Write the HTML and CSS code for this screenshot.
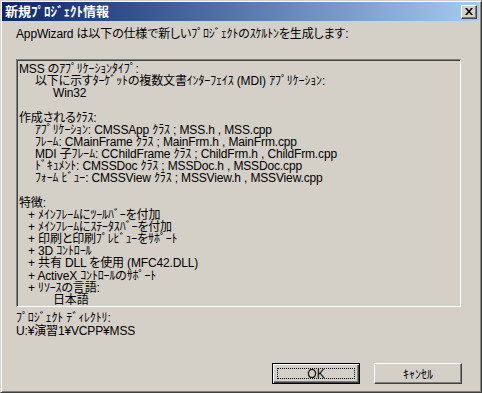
FILE: index.html
```html
<!DOCTYPE html>
<html>
<head>
    <title>新規プロジェクト情報</title>
    <link rel="stylesheet" href="styles.css">
</head>
<body>
    <div class="window">
        <div class="titlebar">
            <span class="title">新規ﾌﾟﾛｼﾞｪｸﾄ情報</span>
            <span class="close-btn">
                <svg width="8" height="7" viewBox="0 0 8 7">
                    <path d="M0 0h2l2 2.5l2-2.5h2l-3 3.5l3 3.5h-2l-2-2.5l-2 2.5h-2l3-3.5z" fill="#000"/>
                </svg>
            </span>
        </div>

        <div class="content">
            <p class="intro">AppWizard は以下の仕様で新しいﾌﾟﾛｼﾞｪｸﾄのｽｹﾙﾄﾝを生成します:</p>

            <!-- summary box -->
            <div class="summary">
                <div>MSS のｱﾌﾟﾘｹｰｼｮﾝﾀｲﾌﾟ:</div>
                <div class="ind1">以下に示すﾀｰｹﾞｯﾄの複数文書ｲﾝﾀｰﾌｪｲｽ (MDI) ｱﾌﾟﾘｹｰｼｮﾝ:</div>
                <div class="ind2">Win32</div>
                <div class="blank"></div>
                <div>作成されるｸﾗｽ:</div>
                <div class="ind1">ｱﾌﾟﾘｹｰｼｮﾝ: CMSSApp ｸﾗｽ ; MSS.h , MSS.cpp</div>
                <div class="ind1">ﾌﾚｰﾑ: CMainFrame ｸﾗｽ ; MainFrm.h , MainFrm.cpp</div>
                <div class="ind1">MDI 子ﾌﾚｰﾑ: CChildFrame ｸﾗｽ ; ChildFrm.h , ChildFrm.cpp</div>
                <div class="ind1">ﾄﾞｷｭﾒﾝﾄ: CMSSDoc ｸﾗｽ ; MSSDoc.h , MSSDoc.cpp</div>
                <div class="ind1">ﾌｫｰﾑ ﾋﾞｭｰ: CMSSView ｸﾗｽ ; MSSView.h , MSSView.cpp</div>
                <div class="blank"></div>
                <div>特徴:</div>
                <div class="feat">+ ﾒｲﾝﾌﾚｰﾑにﾂｰﾙﾊﾞｰを付加</div>
                <div class="feat">+ ﾒｲﾝﾌﾚｰﾑにｽﾃｰﾀｽﾊﾞｰを付加</div>
                <div class="feat">+ 印刷と印刷ﾌﾟﾚﾋﾞｭｰをｻﾎﾟｰﾄ</div>
                <div class="feat">+ 3D ｺﾝﾄﾛｰﾙ</div>
                <div class="feat">+ 共有 DLL を使用 (MFC42.DLL)</div>
                <div class="feat">+ ActiveX ｺﾝﾄﾛｰﾙのｻﾎﾟｰﾄ</div>
                <div class="feat">+ ﾘｿｰｽの言語:</div>
                <div class="ind2">日本語</div>
            </div>

            <div class="dir-label">ﾌﾟﾛｼﾞｪｸﾄ ﾃﾞｨﾚｸﾄﾘ:</div>
            <div class="dir-path">U:¥演習1¥VCPP¥MSS</div>

            <div class="buttons">
                <button class="btn btn-default"><span class="focus">OK</span></button>
                <button class="btn">ｷｬﾝｾﾙ</button>
            </div>
        </div>
    </div>
</body>
</html>
```

FILE: styles.css
```css
body {
    margin: 0;
    padding: 0;
    background-color: #d4d0c8;
    font-family: "Liberation Sans", "Noto Sans CJK JP", sans-serif;
    font-size: 12px;
    font-feature-settings: "palt";
    color: #000;
}

/* outer window frame */
.window {
    width: 482px;
    height: 393px;
    box-sizing: border-box;
    background-color: #d4d0c8;
    border-top: 1px solid #d4d0c8;
    border-left: 1px solid #d4d0c8;
    border-right: 1px solid #404040;
    border-bottom: 1px solid #404040;
    box-shadow: inset 1px 1px 0 #ffffff, inset -1px -1px 0 #808080;
    padding: 1px 2px 0 1px;
    overflow: hidden;
}

.titlebar {
    height: 19px;
    display: flex;
    align-items: center;
    justify-content: space-between;
    padding: 0 2px 0 3px;
    background: linear-gradient(to right, #0a246a, #a6caf0);
}

.title {
    color: #ffffff;
    font-weight: bold;
    font-size: 13px;
    line-height: 13px;
}

.close-btn {
    width: 16px;
    height: 14px;
    box-sizing: border-box;
    display: flex;
    align-items: center;
    justify-content: center;
    background-color: #d4d0c8;
    border-top: 1px solid #ffffff;
    border-left: 1px solid #ffffff;
    border-right: 1px solid #404040;
    border-bottom: 1px solid #404040;
    box-shadow: inset -1px -1px 0 #808080;
}

.content {
    padding: 7px 0 0 14px;
    letter-spacing: -0.15px;
}

.intro {
    margin: 0;
    line-height: 13px;
}

/* sunken box */
.summary {
    margin-top: 18px;
    width: 445px;
    height: 248px;
    box-sizing: border-box;
    border-top: 1px solid #808080;
    border-left: 1px solid #808080;
    border-right: 1px solid #ffffff;
    border-bottom: 1px solid #ffffff;
    box-shadow: inset 1px 1px 0 #404040, inset -1px -1px 0 #d4d0c8;
    padding: 3px 0 0 2px;
    line-height: 12.15px;
    white-space: nowrap;
}

.blank {
    height: 12.15px;
}

.ind1 {
    padding-left: 16px;
}

.ind2 {
    padding-left: 34px;
}

.feat {
    padding-left: 9px;
}

.dir-label {
    margin-top: 5px;
    line-height: 13px;
}

.dir-path {
    line-height: 13px;
}

.buttons {
    display: flex;
    gap: 14px;
    justify-content: flex-end;
    width: 446px;
    margin-top: 25px;
    letter-spacing: 0;
}

.btn {
    width: 88px;
    height: 21px;
    padding: 0;
    font-family: "Liberation Sans", "Noto Sans CJK JP", sans-serif;
    font-size: 12px;
    font-feature-settings: "palt";
    color: #000;
    background-color: #d4d0c8;
    border-top: 1px solid #ffffff;
    border-left: 1px solid #ffffff;
    border-right: 1px solid #404040;
    border-bottom: 1px solid #404040;
    box-shadow: inset -1px -1px 0 #808080;
}

.btn-default {
    border: 1px solid #000;
    box-shadow: inset 1px 1px 0 #ffffff, inset -1px -1px 0 #404040, inset -2px -2px 0 #808080;
    display: flex;
    padding: 4px;
}

.focus {
    flex: 1;
    display: flex;
    align-items: center;
    justify-content: center;
    border: 1px dotted #000;
}
```
